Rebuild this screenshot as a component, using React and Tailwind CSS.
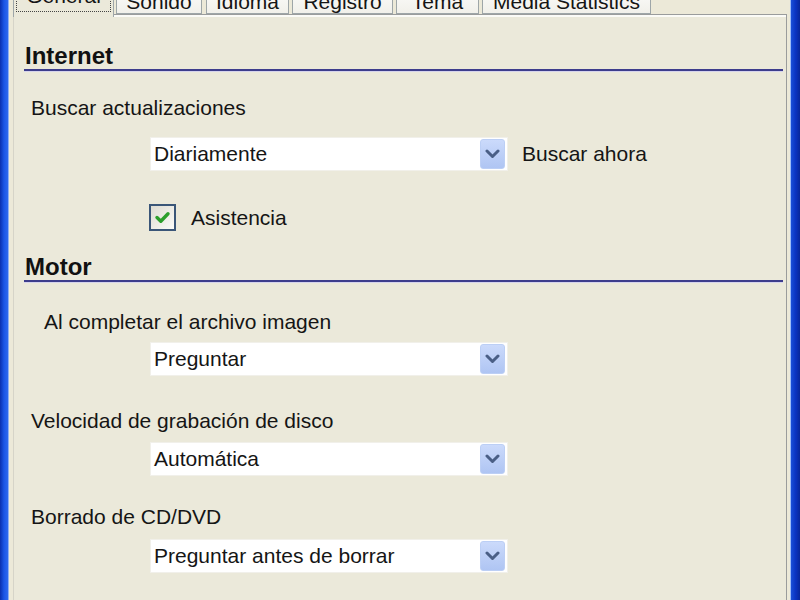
import React from "react";

function Chevron() {
  return (
    <svg width="15" height="10" viewBox="0 0 15 10">
      <path
        d="M2 2 L7.5 7.5 L13 2"
        fill="none"
        stroke="#4a5f86"
        strokeWidth="3"
        strokeLinecap="round"
        strokeLinejoin="round"
      />
    </svg>
  );
}

function Combo({ value }) {
  return (
    <div className="w-[358px] h-[34px] bg-white flex items-center pl-[3px] pr-[2px] border border-[#f1f0ea] shrink-0">
      <span className="flex-1 text-[21px] leading-[24px] text-[#151515]">{value}</span>
      <div className="w-[25px] h-[30px] rounded-[3px] bg-gradient-to-b from-[#cbdafb] to-[#afc5f3] border border-[#bccff5] flex items-center justify-center">
        <Chevron />
      </div>
    </div>
  );
}

function SectionHeader({ title, className }) {
  return (
    <div className={className}>
      <div className="pl-[11px] text-[24px] font-bold leading-[24px] text-[#111]">{title}</div>
      <div className="ml-[10px] mr-[3px] mt-[1px] h-[2px] bg-[#3d3d8c]" />
      <div className="ml-[10px] mr-[3px] h-[1px] bg-[#d6d4ec]" />
    </div>
  );
}

function Label({ children, className }) {
  return <div className={`text-[21px] leading-[24px] text-[#151515] ${className}`}>{children}</div>;
}

const tabs = [
  { name: "Sonido", w: "w-[86px]", ml: "ml-[2px]" },
  { name: "Idioma", w: "w-[83px]", ml: "ml-[4px]" },
  { name: "Registro", w: "w-[101px]", ml: "ml-[3px]" },
  { name: "Tema", w: "w-[83px]", ml: "ml-[3px]" },
  { name: "Media Statistics", w: "w-[169px]", ml: "ml-[3px]" },
];

export default function App() {
  return (
    <div className="w-[800px] h-[600px] overflow-hidden flex bg-[#ece9d8] font-['Liberation_Sans',Arial,sans-serif]">
      {/* left window frame */}
      <div className="w-[8px] bg-gradient-to-r from-[#0a2fae] via-[#1a55e6] to-[#2d68ee]" />
      <div className="w-[1px] bg-[#8fb0f2]" />

      <div className="flex-1 flex flex-col pl-[4px] pr-[3px]">
        {/* tabs */}
        <div className="h-[14px] flex items-end relative z-10">
          <div className="w-[101px] h-[33px] -mb-[3px] self-end bg-[#ebe9da] border-x border-[#9ea6a8] flex justify-center shrink-0">
            <div className="self-end mb-[5px] w-[95px] h-[40px] border border-dotted border-[#444] flex items-end justify-center">
              <span className="text-[21px] leading-[24px] mb-[3px] text-[#151515]">General</span>
            </div>
          </div>
          {tabs.map((t) => (
            <div
              key={t.name}
              className={`${t.w} ${t.ml} h-[30px] shrink-0 bg-gradient-to-b from-[#fefefe] to-[#f1f0ea] border-x border-b border-[#9ea6a8] flex justify-center items-end`}
            >
              <span className="text-[21px] leading-[24px] mb-[-1px] text-[#151515]">{t.name}</span>
            </div>
          ))}
        </div>

        {/* tab page */}
        <div className="flex-1 bg-[#ebe9da] border-t border-r border-[#9a9c9c] border-l border-l-[#d6d4c8] flex flex-col">
          <div className="h-[2px] bg-[#fbfbf7]" />
          <SectionHeader title="Internet" className="mt-[27px]" />

          <Label className="mt-[24px] pl-[17px]">Buscar actualizaciones</Label>
          <div className="mt-[17px] flex items-center">
            <div className="ml-[136px]">
              <Combo value="Diariamente" />
            </div>
            <span className="ml-[14px] text-[21px] leading-[24px] text-[#151515]">Buscar ahora</span>
          </div>

          <div className="mt-[33px] flex items-center">
            <div className="ml-[135px] w-[27px] h-[27px] border-2 border-[#3a5678] bg-gradient-to-br from-[#dedcd2] to-[#fbfbf8] flex items-center justify-center">
              <svg width="21" height="21" viewBox="0 0 21 21">
                <path
                  d="M5 10.5 L8.8 14.2 L16 6.8"
                  fill="none"
                  stroke="#2c9f2c"
                  strokeWidth="3.4"
                  strokeLinecap="round"
                  strokeLinejoin="round"
                />
              </svg>
            </div>
            <span className="ml-[15px] text-[21px] leading-[24px] text-[#151515]">Asistencia</span>
          </div>

          <SectionHeader title="Motor" className="mt-[24px]" />

          <Label className="mt-[27px] pl-[30px]">Al completar el archivo imagen</Label>
          <div className="mt-[8px] ml-[136px]">
            <Combo value="Preguntar" />
          </div>

          <Label className="mt-[33px] pl-[17px]">Velocidad de grabación de disco</Label>
          <div className="mt-[9px] ml-[136px]">
            <Combo value="Automática" />
          </div>

          <Label className="mt-[29px] pl-[17px]">Borrado de CD/DVD</Label>
          <div className="mt-[10px] ml-[136px]">
            <Combo value="Preguntar antes de borrar" />
          </div>
        </div>
      </div>

      {/* right window frame */}
      <div className="w-[1px] bg-[#9cbcf8]" />
      <div className="w-[9px] bg-gradient-to-r from-[#1a4fd8] via-[#0b34c2] to-[#08279a]" />
    </div>
  );
}
